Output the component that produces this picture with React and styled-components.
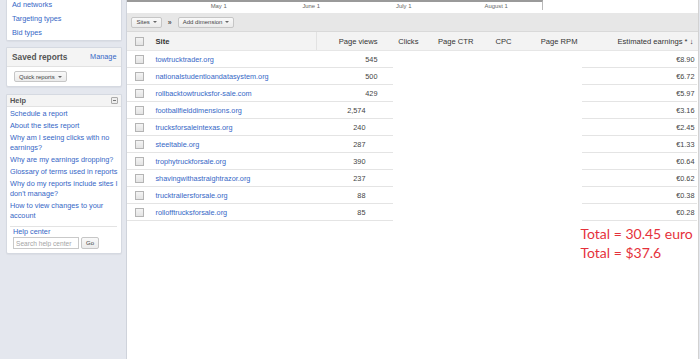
import React from "react";
import styled, { createGlobalStyle } from "styled-components";

const Global = createGlobalStyle`
  html, body { margin: 0; padding: 0; }
  body {
    background: #e4e7ee;
    font-family: "Liberation Sans", Arial, sans-serif;
    -webkit-font-smoothing: antialiased;
  }
`;

const Page = styled.div`
  display: flex;
  height: 359px;
  overflow: hidden;
  background: #e4e7ee;
  font-size: 8px;
`;

const Sidebar = styled.aside`
  flex: 0 0 115px;
  padding-left: 6px;
  display: flex;
  flex-direction: column;
  gap: 6px;
`;

const Panel = styled.section`
  background: #fff;
  border: 1px solid #d5d9e1;
  border-top: ${(p) => (p.$cut ? "none" : "1px solid #d5d9e1")};
  border-radius: 0 0 2px 2px;
  box-shadow: 0 1px 1px rgba(0, 0, 0, 0.04);
  margin-top: ${(p) => p.$mt || 0}px;
`;

const PanelHeader = styled.div`
  display: flex;
  align-items: center;
  justify-content: space-between;
  height: ${(p) => p.$h}px;
  padding: 0 ${(p) => p.$px}px;
  background: #f4f4f4;
  border-bottom: 1px solid #e2e2e2;
`;

const PanelTitle = styled.span`
  font-weight: bold;
  color: #555;
  font-size: ${(p) => p.$size}px;
`;

const Link = styled.a`
  color: #3567c6;
  font-size: 7.3px;
  line-height: ${(p) => p.$lh || 10}px;
  text-decoration: none;
  white-space: nowrap;
  display: block;
`;

const LinkList = styled.div`
  display: flex;
  flex-direction: column;
  gap: ${(p) => p.$gap}px;
  padding: ${(p) => p.$pad};
  margin-top: ${(p) => p.$mt || 0}px;
`;

const SmallButton = styled.button`
  display: inline-flex;
  align-items: center;
  gap: 3px;
  height: ${(p) => p.$h || 11}px;
  padding: 0 4px;
  font-family: inherit;
  font-size: 6px;
  color: #444;
  border: 1px solid #c6c6c6;
  border-radius: 2px;
  background: linear-gradient(#f9f9f9, #ebebeb);
  cursor: default;
`;

const Caret = styled.span`
  width: 0;
  height: 0;
  border-left: 2px solid transparent;
  border-right: 2px solid transparent;
  border-top: 2.5px solid #666;
`;

const PanelBody = styled.div`
  display: flex;
  flex-direction: column;
  align-items: flex-start;
  padding: ${(p) => p.$pad};
`;

const Toggle = styled.span`
  width: 5px;
  height: 5px;
  border: 1px solid #aaa;
  border-radius: 1px;
  background: #eee;
  display: flex;
  align-items: center;
  justify-content: center;
  &::after {
    content: "";
    width: 3px;
    height: 1px;
    background: #777;
  }
`;

const Divider = styled.div`
  align-self: stretch;
  height: 1px;
  background: #e3e3e3;
  margin: 5px 0 0;
`;

const SearchRow = styled.div`
  display: flex;
  align-items: center;
  gap: 2px;
`;

const SearchInput = styled.input`
  width: 66px;
  height: 12px;
  box-sizing: border-box;
  padding: 0 2px;
  border: 1px solid #c9c9c9;
  font-family: inherit;
  font-size: 6.6px;
  color: #999;
  &::placeholder { color: #a5a5a5; }
`;

const Main = styled.main`
  flex: 0 0 571px;
  margin-left: 4px;
  border-left: 1px solid #cfd3db;
  border-right: 1px solid #d2d2d2;
  background: #fff;
  display: flex;
  flex-direction: column;
`;

const Chart = styled.div`
  width: 416px;
  height: 10px;
  border-right: 1px solid #b9b9b9;
  border-top: 2px solid #9a9a9a;
  box-sizing: border-box;
  display: flex;
  padding-left: 45px;
`;

const ChartLabel = styled.span`
  width: 93px;
  text-align: center;
  font-size: 5.9px;
  color: #666;
  line-height: 8px;
`;

const Toolbar = styled.div`
  margin-top: 3px;
  height: 18px;
  background: #e7e7e7;
  display: flex;
  align-items: center;
  gap: 4px;
  padding-left: 4px;
`;

const Chevrons = styled.span`
  font-size: 7px;
  color: #555;
  font-weight: bold;
  padding: 0 2px;
`;

const Grid = styled.div`
  display: grid;
  grid-template-columns: 23px 166px 77px 30px 55px 38px 66px 115px;
  height: ${(p) => p.$h}px;
  background: ${(p) => p.$bg || "#fff"};
  border-top: ${(p) => (p.$head ? "1px solid #d9d9d9" : "none")};
  border-bottom: ${(p) => (p.$head ? "1px solid #e6e6e6" : "none")};
`;

const Cell = styled.div`
  display: flex;
  align-items: center;
  justify-content: ${(p) =>
    p.$align === "right" ? "flex-end" : p.$align === "center" ? "center" : "flex-start"};
  padding-left: ${(p) => p.$pl || 0}px;
  padding-right: ${(p) => p.$pr || 0}px;
  border-bottom: ${(p) => (p.$line ? "1px solid #e4e4e4" : "none")};
  border-left: ${(p) => (p.$sep ? "1px solid #e2e2e2" : "none")};
  font-size: ${(p) => (p.$head ? "7.6px" : "7.3px")};
  font-weight: ${(p) => (p.$bold ? "bold" : "normal")};
  color: ${(p) => (p.$head ? "#333" : "#444")};
  white-space: nowrap;
  min-width: 0;
`;

const Check = styled.span`
  width: 7px;
  height: 7px;
  margin-left: 8px;
  border: 1px solid #b4b4b4;
  background: linear-gradient(#f4f4f4, #e4e4e4);
`;

const SiteLink = styled.a`
  color: #3567c6;
  text-decoration: none;
`;

const Totals = styled.div`
  margin-top: 3px;
  padding-left: 453px;
  font-family: Lato, "Open Sans", sans-serif;
  font-size: 14px;
  line-height: 19px;
  color: #e5313b;
  white-space: nowrap;
`;

const rows = [
  ["towtrucktrader.org", "545", "€8.90", false],
  ["nationalstudentloandatasystem.org", "500", "€6.72", false],
  ["rollbacktowtrucksfor-sale.com", "429", "€5.97", false],
  ["footballfielddimensions.org", "2,574", "€3.16", true],
  ["trucksforsaleintexas.org", "240", "€2.45", true],
  ["steeltable.org", "287", "€1.33", true],
  ["trophytruckforsale.org", "390", "€0.64", true],
  ["shavingwithastraightrazor.org", "237", "€0.62", true],
  ["trucktrailersforsale.org", "88", "€0.38", true],
  ["rollofftrucksforsale.org", "85", "€0.28", true],
];

export default function App() {
  return (
    <>
      <Global />
      <Page>
        <Sidebar>
          <Panel $cut>
            <LinkList $gap={0} $pad="0 0 0 5px" $mt={-2}>
              <Link $lh={14}>Ad networks</Link>
              <Link $lh={14}>Targeting types</Link>
              <Link $lh={14}>Bid types</Link>
            </LinkList>
          </Panel>

          <Panel>
            <PanelHeader $h={18} $px={5}>
              <PanelTitle $size={8.3}>Saved reports</PanelTitle>
              <Link>Manage</Link>
            </PanelHeader>
            <PanelBody $pad="4px 5px 4px 7px">
              <SmallButton>
                Quick reports <Caret />
              </SmallButton>
            </PanelBody>
          </Panel>

          <Panel $mt={1}>
            <PanelHeader $h={11} $px={3}>
              <PanelTitle $size={7.4}>Help</PanelTitle>
              <Toggle />
            </PanelHeader>
            <PanelBody $pad="2px 4px 4px 3px">
              <LinkList $gap={2} $pad="0">
                <Link>Schedule a report</Link>
                <Link>About the sites report</Link>
                <Link>
                  Why am I seeing clicks with no
                  <br />
                  earnings?
                </Link>
                <Link>Why are my earnings dropping?</Link>
                <Link>Glossary of terms used in reports</Link>
                <Link>
                  Why do my reports include sites I
                  <br />
                  don't manage?
                </Link>
                <Link>
                  How to view changes to your
                  <br />
                  account
                </Link>
              </LinkList>
              <Divider />
              <LinkList $gap={0} $pad="0 0 0 3px">
                <Link>Help center</Link>
                <SearchRow>
                  <SearchInput placeholder="Search help center" readOnly />
                  <SmallButton $h={12}>Go</SmallButton>
                </SearchRow>
              </LinkList>
            </PanelBody>
          </Panel>
        </Sidebar>

        <Main>
          <Chart>
            <ChartLabel>May 1</ChartLabel>
            <ChartLabel>June 1</ChartLabel>
            <ChartLabel>July 1</ChartLabel>
            <ChartLabel>August 1</ChartLabel>
          </Chart>

          <Toolbar>
            <SmallButton>
              Sites <Caret />
            </SmallButton>
            <Chevrons>»</Chevrons>
            <SmallButton>
              Add dimension <Caret />
            </SmallButton>
          </Toolbar>

          <Grid $h={18} $bg="#f3f3f3" $head>
            <Cell $head>
              <Check />
            </Cell>
            <Cell $head $bold $pl={5}>Site</Cell>
            <Cell $head $align="right" $pr={16} $sep>Page views</Cell>
            <Cell $head $align="right" $pr={5}>Clicks</Cell>
            <Cell $head $align="right" $pr={5}>Page CTR</Cell>
            <Cell $head $align="right" $pr={5}>CPC</Cell>
            <Cell $head $align="right" $pr={5}>Page RPM</Cell>
            <Cell $head $align="right" $pr={4}>Estimated earnings * ↓</Cell>
          </Grid>

          {rows.map(([site, pv, earn, shifted]) => (
            <Grid key={site} $h={17}>
              <Cell $line>
                <Check />
              </Cell>
              <Cell $line $pl={5}>
                <SiteLink>{site}</SiteLink>
              </Cell>
              <Cell $line $align="right" $pr={shifted ? 28 : 16}>
                {pv}
              </Cell>
              <Cell />
              <Cell />
              <Cell />
              <Cell />
              <Cell $line $align="right" $pr={3}>
                {earn}
              </Cell>
            </Grid>
          ))}

          <Totals>
            Total = 30.45 euro
            <br />
            Total = $37.6
          </Totals>
        </Main>
      </Page>
    </>
  );
}
